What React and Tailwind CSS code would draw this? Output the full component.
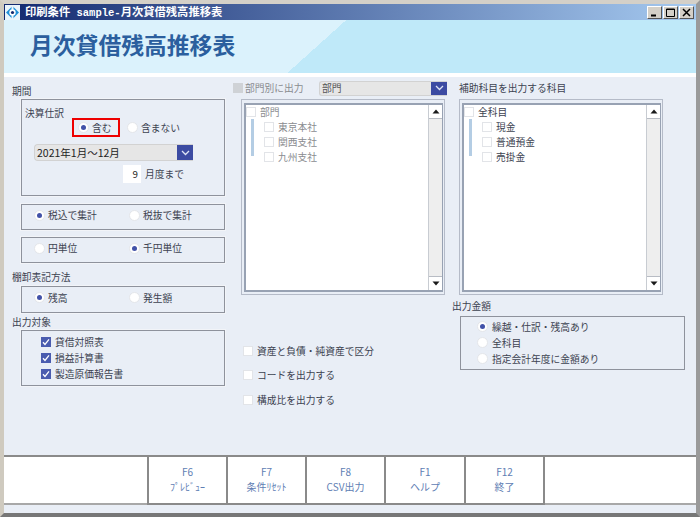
const FONT = "font-['Noto_Sans_CJK_JP','Noto_Sans',sans-serif]";

function Radio({ checked, label, className = "" }) {
  return (
    <span className={"flex items-center gap-[3px] " + className}>
      <span className="w-[11px] h-[11px] rounded-full bg-white flex items-center justify-center shrink-0 border border-[#e4e6ea]">
        {checked && <span className="w-[5px] h-[5px] rounded-full bg-[#4252a8]" />}
      </span>
      <span className="leading-[14px] whitespace-nowrap">{label}</span>
    </span>
  );
}

function Check({ checked, label, className = "", muted }) {
  return (
    <span className={"flex items-center gap-[4px] " + className}>
      {checked ? (
        <span className="w-[10px] h-[10px] bg-[#4a5caf] flex items-center justify-center shrink-0">
          <svg width="8" height="8" viewBox="0 0 8 8" fill="none">
            <path d="M1 4.2 L3 6.4 L7 1.4" stroke="#fff" strokeWidth="1.3" />
          </svg>
        </span>
      ) : (
        <span className="w-[10px] h-[10px] bg-white border border-[#e2e4e8] shrink-0" />
      )}
      <span className={"leading-[14px] whitespace-nowrap " + (muted ? "text-[#8a8c90]" : "")}>{label}</span>
    </span>
  );
}

function Arrow({ up }) {
  return (
    <svg width="8" height="5" viewBox="0 0 8 5">
      <path d={up ? "M4 0.5 L7.5 4.5 L0.5 4.5 Z" : "M4 4.5 L7.5 0.5 L0.5 0.5 Z"} fill="#1a1a1a" />
    </svg>
  );
}

function ListBox({ head, items, muted }) {
  return (
    <div className="w-[204px] h-[196px] border border-[#b5bbc8] pl-[2px] pt-[3px] pb-[2px] pr-[1px]">
      <div className="h-full border-2 border-[#98a2b3] border-r-[1px] bg-white flex">
        <div className="flex-1 -mt-[1px]">
          <Check label={head} muted={muted} className="h-[15px]" />
          <div className="flex">
            <div className="w-[3px] h-[37px] ml-[5px] bg-[#b4cde4]" />
            <div className="ml-[10px]">
              {items.map((t) => (
                <Check key={t} label={t} muted={muted} className="h-[15px]" />
              ))}
            </div>
          </div>
        </div>
        <div className="w-[14px] bg-[#eeeeee] flex flex-col justify-between border-l border-[#c8ccd2]">
          <div className="h-[14px] bg-white flex items-center justify-center border-b border-[#b8bcc4]">
            <Arrow up />
          </div>
          <div className="h-[14px] bg-white flex items-center justify-center border-t border-[#b8bcc4]">
            <Arrow />
          </div>
        </div>
      </div>
    </div>
  );
}

function Chevron() {
  return (
    <span className="w-[16px] h-full bg-[#3c4ba2] flex items-center justify-center shrink-0">
      <svg width="9" height="6" viewBox="0 0 9 6" fill="none">
        <path d="M1 1 L4.5 4.5 L8 1" stroke="#dfe4f5" strokeWidth="1.3" />
      </svg>
    </span>
  );
}

function Group({ className = "", children }) {
  return (
    <div className={"ml-[9px] w-[204px] border border-[#8e929c] shadow-[0_0_0_1px_#f2f4f8] " + className}>
      {children}
    </div>
  );
}

function FnKey({ k, label, wide }) {
  return (
    <div className={(wide ? "w-[80px]" : "w-[79px]") + " h-[48px] border-r-2 border-b-2 border-[#8a8a8a] flex flex-col items-center pt-[7px] text-[#5f80b4] text-[10px] leading-[15px]"}>
      <span>{k}</span>
      <span>{label}</span>
    </div>
  );
}

export default function App() {
  return (
    <div className={"w-[700px] h-[517px] flex flex-col overflow-hidden bg-[#e9eef6] text-[#3c4250] text-[9.75px] border-t-[4px] border-l-[4px] border-r-[4px] border-b-[4px] border-t-[#d4d0c8] border-l-[#cfcabf] border-r-[#9a9a9a] border-b-[#777] " + FONT}>
      <div className="h-[16px] shrink-0 flex items-center bg-[linear-gradient(90deg,#13296f,#a6caf0)]">
        <svg width="15" height="15" viewBox="0 0 15 15" className="ml-[1px]">
          <rect width="15" height="15" fill="#eaf4fb" />
          <path d="M7.5 1 L14 7.5 L7.5 14 L1 7.5 Z" fill="#1f8fd8" />
          <path d="M7.5 0 V15" stroke="#eaf4fb" strokeWidth="2" />
          <circle cx="7.5" cy="7.5" r="3.2" fill="#fff" />
          <circle cx="7.5" cy="7.5" r="1.6" fill="#13296f" />
        </svg>
        <span className="ml-[5px] text-white font-bold text-[11.3px] whitespace-nowrap">
          印刷条件<span className="text-[10.5px] font-['Liberation_Mono',monospace]"> sample-</span>月次貸借残高推移表
        </span>
        <div className="ml-auto mr-[2px] flex gap-[1px]">
          {["min", "max", "close"].map((n) => (
            <span key={n} className="w-[15px] h-[13px] bg-[#d4d0c8] border border-t-white border-l-white border-r-[#555] border-b-[#555] flex items-center justify-center">
              <svg width="9" height="9" viewBox="0 0 9 9" fill="none" stroke="#000">
                {n === "min" && <path d="M1 7.5 H6" strokeWidth="2" />}
                {n === "max" && <path d="M0.5 1 H8.5 V8.5 H0.5 Z M0.5 1.5 H8.5" />}
                {n === "close" && <path d="M1 1 L8 8 M8 1 L1 8" strokeWidth="1.5" />}
              </svg>
            </span>
          ))}
        </div>
      </div>

      <div className="h-[53px] shrink-0 flex items-center pl-[26px] pb-[3px] bg-[linear-gradient(138deg,#dbf2fc_229px,#bfe9f9_229px)]">
        <h1 className="text-[22.8px] font-bold leading-none text-[#2b5f9e]">月次貸借残高推移表</h1>
      </div>
      <div className="h-[4px] shrink-0 bg-white" />

      <div className="flex-1 flex">
        <div className="w-[228px] shrink-0 pl-[8px] pt-[7px]">
          <div className="h-[14px] leading-[14px]">期間</div>
          <Group className="h-[97px] mt-[1px] pt-[6px]">
            <div className="ml-[3px] leading-[14px]">決算仕訳</div>
            <div className="flex items-center">
              <div className="ml-[50px] w-[48px] h-[19px] border-2 border-[#ee0000] flex items-center pl-[4px] mt-[-2px]">
                <Radio checked label="含む" />
              </div>
              <Radio label="含まない" className="ml-[7px] mt-[-2px]" />
            </div>
            <div className="ml-[12px] mt-[7px] w-[159px] h-[17px] rounded-l-[4px] bg-[#e6e6e6] border border-[#d2d2d2] border-r-0 flex items-center justify-between text-[#222]">
              <span className="pl-[2px] text-[10.5px]">2021年1月～12月</span>
              <Chevron />
            </div>
            <div className="flex items-center ml-[101px] mt-[4px]">
              <span className="w-[18px] h-[18px] bg-white text-right pr-[3px] leading-[18px] text-[#222]">9</span>
              <span className="ml-[4px] leading-[18px]">月度まで</span>
            </div>
          </Group>
          <Group className="h-[26px] mt-[8px] pb-[4px] flex items-center pl-[12px]">
            <Radio checked label="税込で集計" className="w-[95px]" />
            <Radio label="税抜で集計" />
          </Group>
          <Group className="h-[26px] mt-[7px] pb-[4px] flex items-center pl-[12px]">
            <Radio label="円単位" className="w-[95px]" />
            <Radio checked label="千円単位" />
          </Group>
          <div className="h-[14px] leading-[14px] mt-[7px]">棚卸表記方法</div>
          <Group className="h-[27px] mt-[2px] pb-[4px] flex items-center pl-[12px]">
            <Radio checked label="残高" className="w-[95px]" />
            <Radio label="発生額" />
          </Group>
          <div className="h-[14px] leading-[14px] mt-[2px]">出力対象</div>
          <Group className="h-[56px] mt-[1px] pl-[19px] pt-[3px]">
            <Check checked label="貸借対照表" className="h-[16px] gap-[3px]" />
            <Check checked label="損益計算書" className="h-[16px] gap-[3px]" />
            <Check checked label="製造原価報告書" className="h-[16px] gap-[3px]" />
          </Group>
        </div>

        <div className="w-[227px] shrink-0">
          <div className="flex items-center pt-[3px] pb-[3px] h-[22px] text-[#8a8c90]">
            <span className="w-[10px] h-[10px] bg-[#cfd2d6] ml-[1px]" />
            <span className="ml-[2px] w-[74px]">部門別に出力</span>
            <div className="w-[128px] h-[15px] rounded-l-[3px] bg-[#e6e6e6] border border-[#d2d2d2] border-r-0 flex items-center justify-between text-[#555]">
              <span className="pl-[2px]">部門</span>
              <Chevron />
            </div>
          </div>
          <div className="ml-[9px]">
            <ListBox head="部門" items={["東京本社", "関西支社", "九州支社"]} muted />
          </div>
          <div className="ml-[11px] mt-[49px] flex flex-col gap-[10px]">
            <Check label="資産と負債・純資産で区分" className="h-[14px]" />
            <Check label="コードを出力する" className="h-[14px]" />
            <Check label="構成比を出力する" className="h-[14px] mt-[1px]" />
          </div>
        </div>

        <div className="flex-1">
          <div className="h-[22px] pt-[4px] leading-[14px]">補助科目を出力する科目</div>
          <ListBox head="全科目" items={["現金", "普通預金", "売掛金"]} />
          <div className="mt-[4px] h-[14px] leading-[14px] ml-[-7px]">出力金額</div>
          <div className="ml-[1px] mt-[3px] w-[225px] h-[54px] border border-[#8e929c] pl-[16px] pt-[2px] flex flex-col">
            <Radio checked label="繰越・仕訳・残高あり" className="h-[15px] gap-[4px]" />
            <Radio label="全科目" className="h-[17px] gap-[4px]" />
            <Radio label="指定会計年度に金額あり" className="h-[15px] gap-[4px]" />
          </div>
        </div>
      </div>

      <div className="h-[50px] shrink-0 bg-white border-t-2 border-b-2 border-t-[#8a8a8a] border-b-[#a8a8a8] flex pl-[143px] mb-[8px]">
        <div className="h-[48px] border-l-2 border-[#8a8a8a]" />
        <FnKey k="F6" label="ﾌﾟﾚﾋﾞｭｰ" />
        <FnKey k="F7" label="条件ﾘｾｯﾄ" />
        <FnKey k="F8" label="CSV出力" />
        <FnKey k="F1" label="ヘルプ" wide />
        <FnKey k="F12" label="終了" />
      </div>
    </div>
  );
}
